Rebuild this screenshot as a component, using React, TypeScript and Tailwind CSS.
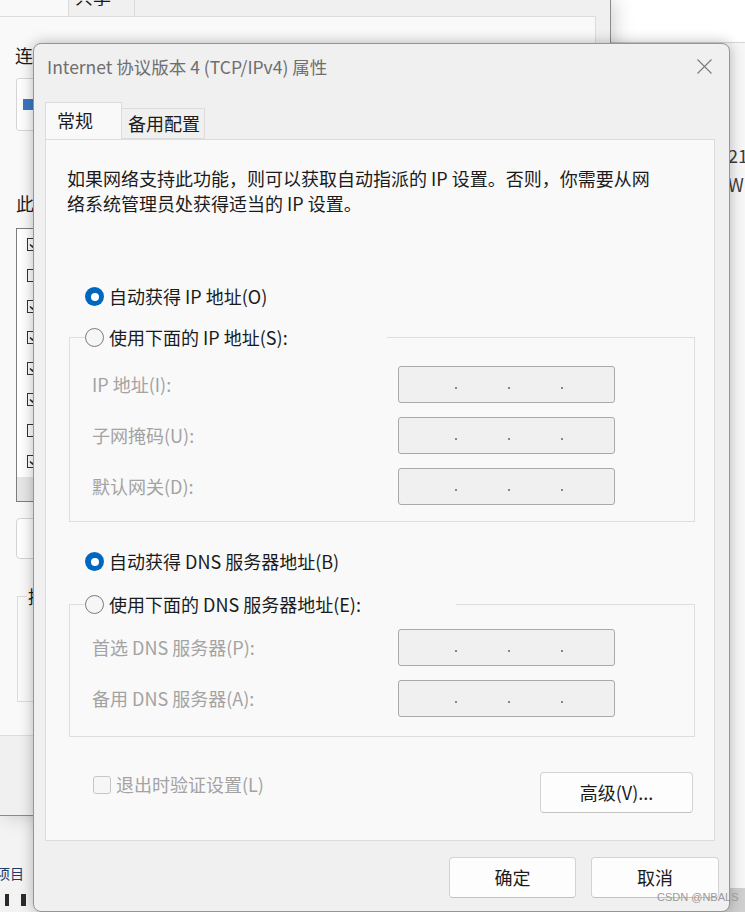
import React from 'react';

const FONT = "font-['Noto_Sans_CJK_SC','Noto_Sans',sans-serif]";

const Radio = ({ checked }: { checked?: boolean }) =>
  checked ? (
    <span className="w-[19px] h-[19px] rounded-full bg-[#0067c0] flex items-center justify-center shrink-0">
      <span className="w-[8px] h-[8px] rounded-full bg-white" />
    </span>
  ) : (
    <span className="w-[19px] h-[19px] rounded-full border border-[#7a7a7a] bg-[#f6f6f6] shrink-0" />
  );

const IpBox = () => (
  <div className="w-[217px] h-[37px] rounded-[3px] border border-[#a9a9a9] bg-[#f0f0f0] flex items-center pl-[56px] gap-[51px] pt-[6px]">
    <span className="w-[2px] h-[2px] bg-[#7d879c]" />
    <span className="w-[2px] h-[2px] bg-[#7d879c]" />
    <span className="w-[2px] h-[2px] bg-[#7d879c]" />
  </div>
);

const FieldRow = ({ label }: { label: string }) => (
  <div className="flex items-center">
    <span className="w-[328px] pl-[22px] text-[#a3a3a3]">{label}</span>
    <IpBox />
  </div>
);

const Group = ({ legend, legendWidth, rows, pt, pb }: { legend: string; legendWidth: string; rows: string[]; pt: string; pb: string }) => (
  <fieldset className="border border-[#dedede] m-0 p-0">
    <legend className={`ml-[15px] ${legendWidth} flex items-center gap-[5px] h-[25px] p-0`}>
      <Radio />
      <span>{legend}</span>
    </legend>
    <div className={`flex flex-col gap-[14px] ${pt} ${pb}`}>
      {rows.map((r) => (
        <FieldRow key={r} label={r} />
      ))}
    </div>
  </fieldset>
);

const Button = ({ children, w }: { children: React.ReactNode; w: string }) => (
  <button className={`${w} h-[41px] rounded-[4px] border border-[#d3d3d3] border-b-[#c2c2c2] bg-[#fdfdfd] text-[18px] text-[#1b1b1b] flex items-center justify-center`}>
    {children}
  </button>
);

const ListCheck = ({ on }: { on: boolean }) => (
  <span className="w-[13px] h-[13px] border border-[#333] bg-white flex items-center justify-center shrink-0">
    {on && (
      <svg width="9" height="9" viewBox="0 0 9 9">
        <path d="M1 4.5 L3.5 7 L8 1.5" fill="none" stroke="#222" strokeWidth="1.5" />
      </svg>
    )}
  </span>
);

const listItems: [boolean, string][] = [
  [true, 'Microsoft 网络客户端'],
  [false, 'VMware Bridge Protocol'],
  [true, 'Microsoft 网络的文件和打印机共享'],
  [true, 'QoS 数据包计划程序'],
  [true, 'Internet 协议版本 4 (TCP/IPv4)'],
  [true, 'Microsoft 网络适配器多路传送器协议'],
  [false, 'Microsoft LLDP 协议驱动程序'],
  [true, 'Internet 协议版本 6 (TCP/IPv6)'],
];

export default function App() {
  return (
    <div className={`relative w-[745px] h-[912px] overflow-hidden bg-[#f3f3f3] text-[18px] leading-[25px] text-[#1b1b1b] ${FONT}`}>
      {/* right background window */}
      <div className="absolute left-[611px] top-0 right-0 bottom-0 flex flex-col bg-white">
        <div className="h-[43px] border-b border-[#d6d6d6] bg-white" />
        <div className="flex-1 bg-[#f7f7f7] pl-[117px] pt-[98px] text-[#3c3c3c] leading-[29px]">
          <div>21</div>
          <div>W</div>
        </div>
        <div className="h-[24px] bg-[#cfcfcf]" />
      </div>

      {/* lower background window */}
      <div className="absolute left-0 top-[815px] w-[611px] bottom-0 bg-[#f3f3f3]">
        <div className="mt-[46px] -ml-[4px] text-[14px] text-[#1d3a66]">项目</div>
        <div className="flex gap-[12px] ml-[5px] mt-[8px]">
          <span className="w-[4px] h-[12px] bg-[#2b2b2b]" />
          <span className="w-[5px] h-[12px] bg-[#2b2b2b]" />
        </div>
      </div>

      {/* parent properties window */}
      <div className="absolute left-0 top-0 w-[611px] h-[816px] bg-[#f0f0f0] border-r border-b border-[#8a8a8a] shadow-[4px_0_18px_rgba(0,0,0,0.18)] flex flex-col">
        <div className="flex items-end h-[16px]">
          <div className="w-[68px] h-[36px] -mt-[20px] bg-[#f9f9f9] leading-[20px]">网络</div>
          <div className="w-[67px] h-[32px] border border-b-0 border-[#dcdcdc] bg-[#f0f0f0] pl-[6px] leading-[22px]">共享</div>
        </div>
        <div className="w-[597px] h-[720px] -ml-px border border-[#dcdcdc] bg-[#f9f9f9] pl-[16px] pr-[16px] pt-[26px] flex flex-col">
          <div className="-ml-px">连接时使用:</div>
          <div className="mt-[10px] h-[53px] border border-[#d5d5d5] rounded-[3px] bg-[#fdfdfd] flex items-center pl-[6px] gap-[8px]">
            <span className="w-[11px] h-[11px] bg-[#3a78c2]" />
            <span>Intel(R) Ethernet Connection</span>
          </div>
          <div className="mt-[60px]">此连接使用下列项目(O):</div>
          <div className="mt-[12px] h-[274px] border border-[#7d7d7d] bg-white flex flex-col">
            {listItems.map(([on, t]) => (
              <div key={t} className="h-[31.5px] flex items-center gap-[6px] pl-[10px]">
                <ListCheck on={on} />
                <span>{t}</span>
              </div>
            ))}
            <div className="mt-auto h-[24px] bg-[#e6e6e6]" />
          </div>
          <div className="mt-[16px] flex gap-[12px]">
            <div className="w-[170px] h-[41px] rounded-[4px] border border-[#d3d3d3] bg-[#fdfdfd] flex items-center justify-center">安装(N)...</div>
          </div>
          <fieldset className="mt-[25px] border border-[#dcdcdc] h-[118px] ml-px">
            <legend className="ml-[9px] px-[1px]">描述</legend>
          </fieldset>
        </div>
      </div>

      {/* TCP/IPv4 dialog */}
      <div className="absolute left-[33px] top-[43px] w-[697px] h-[869px] rounded-[8px] border border-[#959595] bg-[#f0f0f0] shadow-[0_0_14px_rgba(0,0,0,0.28)] flex flex-col">
        <div className="h-[44px] flex items-center justify-between pl-[13px] pr-[17px]">
          <span className="text-[17.5px] text-[#6e6e6e]">Internet 协议版本 4 (TCP/IPv4) 属性</span>
          <svg width="15" height="15" viewBox="0 0 15 15">
            <path d="M0.5 0.5 L14.5 14.5 M14.5 0.5 L0.5 14.5" stroke="#7a7a7a" strokeWidth="1.1" />
          </svg>
        </div>

        <div className="mt-[15px] ml-[11px] mr-[14px] flex flex-col">
          <div className="flex items-end h-[36px]">
            <div className="relative z-10 w-[77px] h-[37px] border border-b-0 border-[#dcdcdc] bg-[#f9f9f9] pl-[11px] pt-[5px]">常规</div>
            <div className="w-[83px] h-[31px] border border-l-0 border-[#dcdcdc] bg-[#f0f0f0] pl-[6px] pt-[2px]">备用配置</div>
          </div>
          <div className="h-[702px] border border-[#dcdcdc] bg-[#f9f9f9] pl-[23px] pr-[19px] pt-[26px] flex flex-col">
            <p className="-ml-[2px]">
              如果网络支持此功能，则可以获取自动指派的 IP 设置。否则，你需要从网
              <br />
              络系统管理员处获得适当的 IP 设置。
            </p>

            <div className="mt-[68px] ml-[16px] flex items-center gap-[5px] h-[25px]">
              <Radio checked />
              <span>自动获得 IP 地址(O)</span>
            </div>

            <div className="mt-[16px]">
              <Group legend="使用下面的 IP 地址(S):" legendWidth="w-[302px]" rows={['IP 地址(I):', '子网掩码(U):', '默认网关(D):']} pt="pt-[16px]" pb="pb-[16px]" />
            </div>

            <div className="mt-[27px] ml-[16px] flex items-center gap-[5px] h-[25px]">
              <Radio checked />
              <span>自动获得 DNS 服务器地址(B)</span>
            </div>

            <div className="mt-[18px]">
              <Group legend="使用下面的 DNS 服务器地址(E):" legendWidth="w-[371px]" rows={['首选 DNS 服务器(P):', '备用 DNS 服务器(A):']} pt="pt-[12px]" pb="pb-[19px]" />
            </div>

            <div className="mt-[35px] flex items-start justify-between">
              <div className="ml-[24px] flex items-center gap-[5px] h-[25px] text-[#a3a3a3]">
                <span className="w-[18px] h-[18px] rounded-[3px] border border-[#c6c6c6] bg-[#f6f6f6]" />
                <span>退出时验证设置(L)</span>
              </div>
              <div className="mr-[2px]">
                <Button w="w-[153px]">高级(V)...</Button>
              </div>
            </div>
          </div>
        </div>

        <div className="mt-[16px] flex justify-end gap-[15px] pr-[10px]">
          <Button w="w-[127px]">确定</Button>
          <Button w="w-[128px]">取消</Button>
        </div>
      </div>

      <div className="absolute left-[657px] top-[890px] text-[11px] leading-[14px] text-[#9a9a9a] font-['Liberation_Sans',sans-serif]">
        CSDN @NBALS
      </div>
    </div>
  );
}
